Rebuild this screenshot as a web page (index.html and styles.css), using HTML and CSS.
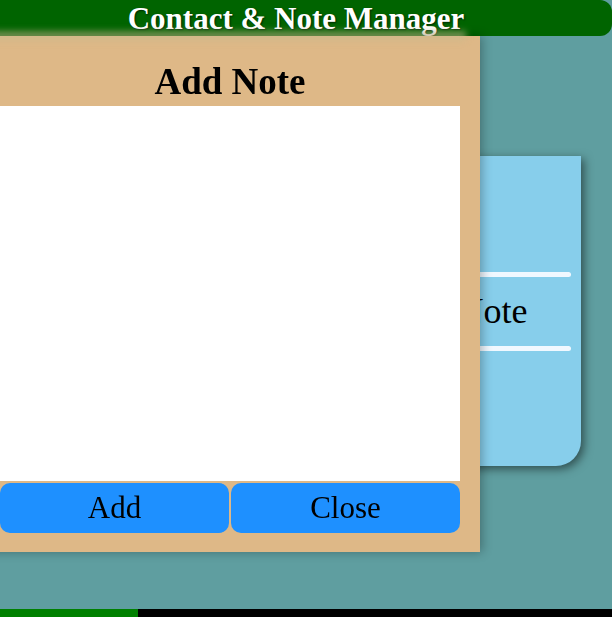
FILE: index.html
```html
<!DOCTYPE html>
<html lang="en">
<head>
<meta charset="utf-8">
<title>Contact &amp; Note Manager</title>
<link rel="stylesheet" href="styles.css">
</head>
<body>
  <header class="app-header">
    <h1 class="app-title">Contact &amp; Note Manager</h1>
  </header>
  <main class="main">
    <nav class="menu-card">
      <div class="menu-line"></div>
      <div class="menu-item">Add Note</div>
      <div class="menu-line"></div>
    </nav>
  </main>
  <div class="scroll-bar">
    <div class="scroll-thumb"></div>
  </div>

  <div class="modal">
    <h2 class="modal-title">Add Note</h2>
    <textarea class="note-input"></textarea>
    <div class="modal-actions">
      <button class="btn">Add</button>
      <button class="btn">Close</button>
    </div>
  </div>
</body>
</html>
```

FILE: styles.css
```css
html, body {
  margin: 0;
  padding: 0;
}

body {
  width: 612px;
  height: 617px;
  overflow: hidden;
  background: #5f9ea0;
  font-family: "Liberation Serif", "Times New Roman", serif;
  display: flex;
  flex-direction: column;
}

.app-header {
  height: 36px;
  margin-left: -20px;
  background: #006400;
  border-radius: 0 12px 12px 0;
  display: flex;
  align-items: center;
  justify-content: center;
  flex: none;
}

.app-title {
  margin: 0;
  padding-top: 1px;
  font-size: 31px;
  line-height: 36px;
  font-weight: bold;
  color: #ffffff;
  text-shadow: 1px 1px 2px rgba(0, 0, 0, 0.6);
}

.main {
  flex: 1;
  display: flex;
  justify-content: flex-end;
  align-items: flex-start;
  padding: 120px 31px 0 0;
}

.menu-card {
  width: 248px;
  height: 310px;
  box-sizing: border-box;
  padding: 0 10px;
  background: #87ceeb;
  border-radius: 0 0 25px 0;
  box-shadow: 3px 3px 10px rgba(0, 0, 0, 0.5);
  display: flex;
  flex-direction: column;
  justify-content: center;
}

.menu-line {
  height: 5px;
  border-radius: 3px;
  background: #f0f8ff;
}

.menu-item {
  height: 69px;
  display: flex;
  align-items: center;
  justify-content: center;
  font-size: 36px;
  color: #000;
}

.scroll-bar {
  height: 8px;
  flex: none;
  background: #000;
  display: flex;
}

.scroll-thumb {
  width: 138px;
  background: #008000;
}

.modal {
  position: fixed;
  left: -20px;
  top: 36px;
  width: 460px;
  padding: 25px 20px 19px;
  background: #deb887;
  box-shadow: 2px 0 10px rgba(0, 0, 0, 0.3);
  z-index: 2;
}

.modal::before {
  content: "";
  position: absolute;
  left: 0;
  right: 14px;
  top: -5px;
  height: 10px;
  background: rgba(200, 185, 140, 0.55);
  filter: blur(3px);
  z-index: -1;
}

.modal-title {
  margin: 0;
  height: 42px;
  line-height: 42px;
  font-size: 37px;
  font-weight: bold;
  text-align: center;
  color: #000;
}

.note-input {
  display: block;
  box-sizing: border-box;
  width: 460px;
  height: 375px;
  margin: 3px 0 0;
  border: none;
  padding: 0;
  background: #fff;
  resize: none;
  outline: none;
}

.modal-actions {
  margin-top: 2px;
  display: flex;
  gap: 2px;
}

.btn {
  flex: 1;
  height: 50px;
  border: none;
  border-radius: 10px;
  background: #1e90ff;
  color: #000;
  font-family: "Liberation Serif", "Times New Roman", serif;
  font-size: 31px;
  padding: 0;
}
```
